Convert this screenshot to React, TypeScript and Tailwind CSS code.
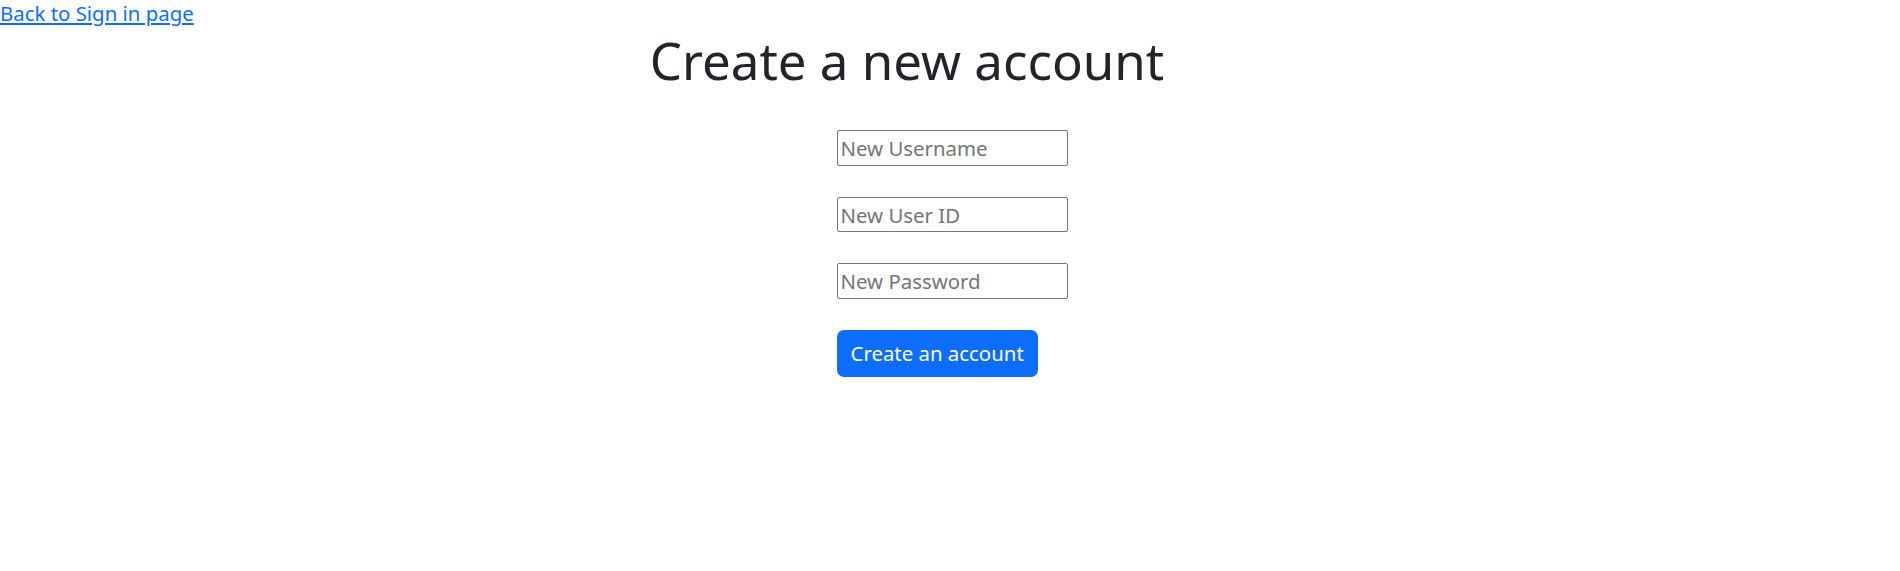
import React from "react";

export default function App() {
  return (
    <div className="min-h-[571px] w-full bg-white font-['Noto_Sans',sans-serif] text-[#212529]">
      <a
        href="#"
        className="block w-fit text-[20.4px] leading-[26px] text-[#0d6efd] underline"
      >
        Back to Sign in page
      </a>

      <h1 className="mt-[2px] flex justify-center pr-[86px] text-[51px] font-normal leading-[64px]">
        Create a new account
      </h1>

      <div className="mt-[38px] flex justify-center pl-[4px]">
        <form className="flex w-[231px] flex-col items-start gap-[31px]">
          <input
            type="text"
            placeholder="New Username"
            className="h-[36px] w-[231px] rounded-[2px] border border-[#767676] px-[3px] text-[20.4px] placeholder:text-[#757575]"
          />
          <input
            type="text"
            placeholder="New User ID"
            className="h-[35px] w-[231px] rounded-[2px] border border-[#767676] px-[3px] text-[20.4px] placeholder:text-[#757575]"
          />
          <input
            type="password"
            placeholder="New Password"
            className="h-[36px] w-[231px] rounded-[2px] border border-[#767676] px-[3px] text-[20.4px] placeholder:text-[#757575]"
          />
          <button
            type="submit"
            className="h-[47px] rounded-[7px] bg-[#0d6efd] px-[14px] text-[20.4px] text-white"
          >
            Create an account
          </button>
        </form>
      </div>
    </div>
  );
}
